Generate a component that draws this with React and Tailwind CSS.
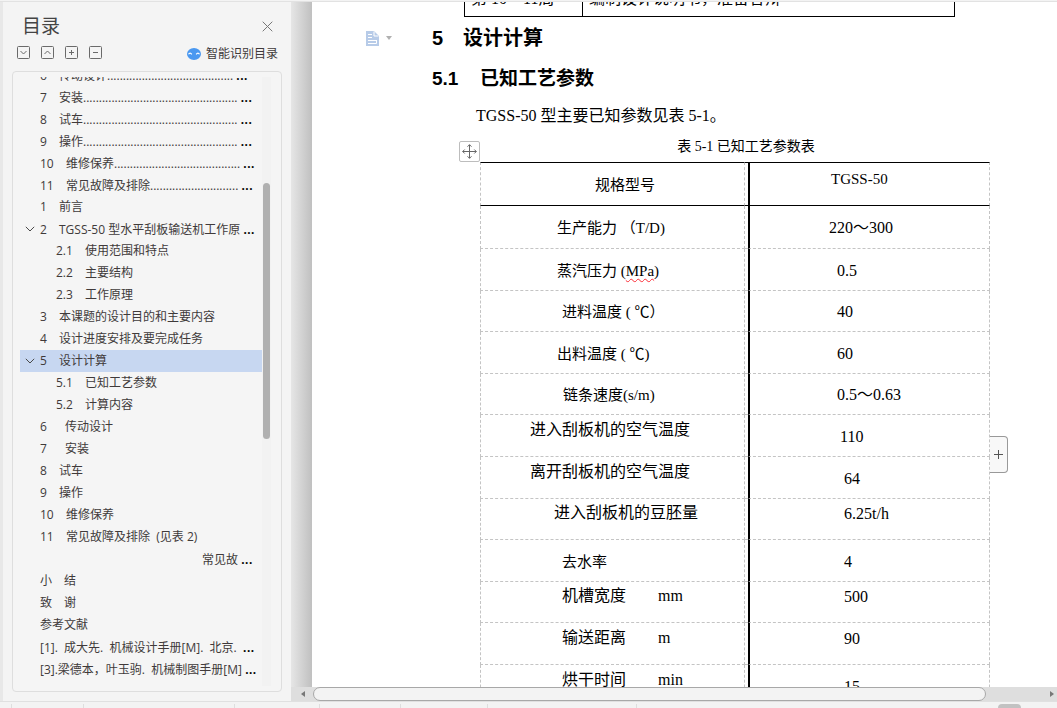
import React from "react";

const outline = [
  { num: "6", title: "传动设计", gap: "w-[19px]", dots: 40 },
  { num: "7", title: "安装", gap: "w-[19px]", dots: 49 },
  { num: "8", title: "试车", gap: "w-[19px]", dots: 49 },
  { num: "9", title: "操作", gap: "w-[19px]", dots: 49 },
  { num: "10", title: "维修保养", gap: "w-[26px]", dots: 40 },
  { num: "11", title: "常见故障及排除", gap: "w-[26px]", dots: 28 },
  { num: "1", title: "前言", gap: "w-[19px]" },
  { num: "2", title: "TGSS-50 型水平刮板输送机工作原", gap: "w-[19px]", open: true, cut: true },
  { num: "2.1", title: "使用范围和特点", gap: "w-[29px]", child: true },
  { num: "2.2", title: "主要结构", gap: "w-[29px]", child: true },
  { num: "2.3", title: "工作原理", gap: "w-[29px]", child: true },
  { num: "3", title: "本课题的设计目的和主要内容", gap: "w-[19px]" },
  { num: "4", title: "设计进度安排及要完成任务", gap: "w-[19px]" },
  { num: "5", title: "设计计算", gap: "w-[19px]", open: true, active: true },
  { num: "5.1", title: "已知工艺参数", gap: "w-[29px]", child: true },
  { num: "5.2", title: "计算内容", gap: "w-[29px]", child: true },
  { num: "6", title: "传动设计", gap: "w-[25px]" },
  { num: "7", title: "安装", gap: "w-[25px]" },
  { num: "8", title: "试车", gap: "w-[19px]" },
  { num: "9", title: "操作", gap: "w-[19px]" },
  { num: "10", title: "维修保养", gap: "w-[26px]" },
  { num: "11", title: "常见故障及排除  (见表 2)", gap: "w-[26px]" },
  { num: "", title: "常见故", gap: "w-[162px]", cut: true },
  { num: "小", title: "结", gap: "w-[24px]" },
  { num: "致", title: "谢", gap: "w-[24px]" },
  { num: "", title: "参考文献", gap: "w-0" },
  { num: "", title: "[1].  成大先.  机械设计手册[M].  北京. ", gap: "w-0", cut: true },
  { num: "", title: "[3].梁德本，叶玉驹.  机械制图手册[M]", gap: "w-0", cut: true },
];

// raised / valueRaised: text sits above the middle of its cell
const params = [
  { h: "h-[43px]", name: "生产能力 （T/D)", size: "text-[15px]", pad: "pl-[76px]", value: "220～300", valuePad: "pl-[79px]" },
  { h: "h-[42px]", name: "蒸汽压力 ", unit: "MPa", size: "text-[15px]", pad: "pl-[76px]", value: "0.5", valuePad: "pl-[87px]" },
  { h: "h-[41px]", name: "进料温度 ( ℃）", size: "text-[15px]", pad: "pl-[81px]", value: "40", valuePad: "pl-[87px]" },
  { h: "h-[42px]", name: "出料温度 ( ℃)", size: "text-[15px]", pad: "pl-[76px]", value: "60", valuePad: "pl-[87px]" },
  { h: "h-[41px]", name: "链条速度(s/m)", size: "text-[15px]", pad: "pl-[82px]", value: "0.5～0.63", valuePad: "pl-[87px]" },
  { h: "h-[42px]", name: "进入刮板机的空气温度", size: "text-base", pad: "pl-[49px]", raised: true, value: "110", valuePad: "pl-[90px]" },
  { h: "h-[42px]", name: "离开刮板机的空气温度", size: "text-base", pad: "pl-[49px]", raised: true, value: "64", valuePad: "pl-[94px]" },
  { h: "h-[41px]", name: "进入刮板机的豆胚量", size: "text-base", pad: "pl-[73px]", raised: true, value: "6.25t/h", valuePad: "pl-[94px]", valueRaised: true },
  { h: "h-[42px]", name: "去水率", size: "text-[15px]", pad: "pl-[81px]", value: "4", valuePad: "pl-[94px]" },
  { h: "h-[41px]", name: "机槽宽度\u3000\u3000mm", size: "text-base", pad: "pl-[81px]", raised: true, value: "500", valuePad: "pl-[94px]", valueRaised: true },
  { h: "h-[42px]", name: "输送距离\u3000\u3000m", size: "text-base", pad: "pl-[81px]", raised: true, value: "90", valuePad: "pl-[94px]", valueRaised: true },
  { h: "h-[42px]", name: "烘干时间\u3000\u3000min", size: "text-base", pad: "pl-[81px]", raised: true, value: "15", valuePad: "pl-[94px]" },
];

const tools = [
  { label: "全部展开", d: "M3.5 5 L6.5 8 L9.5 5" },
  { label: "全部折叠", d: "M3.5 8 L6.5 5 L9.5 8" },
  { label: "增加级别", d: "M4 6.5 H9 M6.5 4 V9" },
  { label: "减少级别", d: "M4 6.5 H9" },
];

const OutlineItem = ({ item }) => (
  <li className={`flex h-[22px] items-center ${item.active ? "bg-[#c7d7f1]" : ""}`}>
    <span className={`flex shrink-0 items-center pl-[5px] ${item.child ? "w-9" : "w-5"}`}>
      {item.open && (
        <button type="button" aria-label={`折叠 ${item.num}`}>
          <svg width="10" height="6" viewBox="0 0 10 6" fill="none" stroke="#4a4a4a" className="block">
            <path d="M0.8 0.8 L5 5 L9.2 0.8" />
          </svg>
        </button>
      )}
    </span>
    <a href="#section" className="flex items-baseline whitespace-pre">
      <span className={`shrink-0 ${item.gap}`}>{item.num}</span>
      <span>
        {item.title}
        {item.dots ? ".".repeat(item.dots) : ""}
      </span>
      {(item.dots || item.cut) && (
        <span className="pl-[3px] text-sm leading-4 font-semibold text-black">...</span>
      )}
    </a>
  </li>
);

const Sidebar = () => (
  <aside className="flex w-72 shrink-0 flex-col bg-[#f4f4f4] text-[#403a3a]">
    <div className="flex h-[42px] items-center justify-between pt-1.5 pr-[18px] pl-[19px]">
      <h2 className="text-[19px] leading-6 text-[#444]">目录</h2>
      <button type="button" aria-label="关闭">
        <svg width="11" height="11" viewBox="0 0 11 11" stroke="#777" className="block">
          <path d="M0.7 0.7 L10.3 10.3 M10.3 0.7 L0.7 10.3" />
        </svg>
      </button>
    </div>

    <div className="flex h-[17px] items-center justify-between pr-[13px] pl-3.5">
      <div className="flex gap-[11px]">
        {tools.map((tool) => (
          <button key={tool.label} type="button" aria-label={tool.label}>
            <svg width="13" height="13" viewBox="0 0 13 13" fill="none" stroke="#6a6a6a" className="block">
              <rect x="0.5" y="0.5" width="12" height="12" rx="1" />
              <path d={tool.d} />
            </svg>
          </button>
        ))}
      </div>
      <button type="button" className="flex items-center gap-[5px] pt-0.5 leading-4">
        <svg width="14" height="12" viewBox="0 0 14 12" className="block">
          <ellipse cx="7" cy="6" rx="7" ry="6" fill="#4a98f0" />
          <path d="M1.5 6.3 Q3 3.8 4.8 6.3 M9.2 6.3 Q11 3.8 12.5 6.3" fill="none" stroke="#fff" strokeWidth="1.2" />
        </svg>
        智能识别目录
      </button>
    </div>

    {/* Outline tree */}
    <nav className="mx-[9px] mt-2.5 mb-[9px] flex min-h-0 flex-1 rounded border border-[#dedede] bg-[#f5f5f5] py-[5px] pl-[7px]">
      <div className="min-w-0 flex-1 overflow-hidden">
        <ul className="-mt-[13px]">
          {outline.map((item, idx) => (
            <OutlineItem key={idx} item={item} />
          ))}
        </ul>
      </div>
      <div className="mr-2.5 w-[9px] bg-[#f2f2f2] pt-[106px]">
        <div className="ml-px h-64 w-[7px] rounded-full bg-[#b0b0b0]" />
      </div>
    </nav>
  </aside>
);

const ParamTable = () => (
  <div className="relative ml-[168px] w-[510px]">
    <table className="w-full table-fixed border-separate border-spacing-0">
      <colgroup>
        <col className="w-[265px]" />
        <col className="w-[3px]" />
        <col />
      </colgroup>
      <thead>
        <tr className="h-11 text-left">
          <th className="border-x border-y border-x-[#c4c4c4] border-y-black p-0 pt-0.5 pl-[114px] text-[15px] font-normal [border-left-style:dashed] [border-right-style:dashed]">
            规格型号
          </th>
          <td className="border-y border-black p-0" />
          <th className="border-y border-r border-l-2 border-black border-r-[#c4c4c4] p-0 pb-2.5 pl-[81px] text-[15px] font-normal [border-right-style:dashed]">
            TGSS-50
          </th>
        </tr>
      </thead>
      <tbody>
        {params.map((row) => (
          <tr key={row.name} className={row.h}>
            <td
              className={`border-x border-b border-dashed border-[#c4c4c4] p-0 leading-5 whitespace-nowrap ${row.size} ${row.pad} ${row.raised ? "pb-3" : "pt-0.5"}`}
            >
              {row.name}
              {row.unit && (
                <>
                  (
                  <span className="underline decoration-red-500 decoration-wavy decoration-1 underline-offset-2">
                    {row.unit}
                  </span>
                  )
                </>
              )}
            </td>
            <td className="border-b border-dashed border-[#c4c4c4] p-0" />
            <td
              className={`border-r border-b border-l-2 border-dashed border-[#c4c4c4] border-l-black p-0 text-base leading-5 [border-left-style:solid] ${row.valuePad} ${row.valueRaised ? "pb-2.5" : "pt-0.5"}`}
            >
              {row.value}
            </td>
          </tr>
        ))}
      </tbody>
    </table>

    {/* Table handles */}
    <button
      type="button"
      aria-label="移动表格"
      className="absolute -top-[21px] -left-[21px] flex size-[21px] items-center justify-center rounded-xs border border-[#bdbdbd] bg-white"
    >
      <svg width="15" height="15" viewBox="0 0 15 15" fill="none" stroke="#666" className="block">
        <path d="M7.5 0.7 V14.3 M0.7 7.5 H14.3 M5.5 2.7 L7.5 0.7 L9.5 2.7 M5.5 12.3 L7.5 14.3 L9.5 12.3 M2.7 5.5 L0.7 7.5 L2.7 9.5 M12.3 5.5 L14.3 7.5 L12.3 9.5" />
      </svg>
    </button>
    <button
      type="button"
      aria-label="添加列"
      className="absolute top-[274px] -right-[18px] flex h-[37px] w-[18px] items-center justify-center rounded-r border border-l-0 border-[#999] bg-[#f8f8f8]"
    >
      <svg width="9" height="9" viewBox="0 0 9 9" stroke="#555" className="block">
        <path d="M0 4.5 H9 M4.5 0 V9" />
      </svg>
    </button>
  </div>
);

const DocumentPage = () => (
  <main className="min-w-0 flex-1 overflow-hidden bg-white font-['Liberation_Serif','Noto_Sans_CJK_SC',serif] text-base text-black">
    <div className="ml-[152px] flex h-[15px] w-[491px] flex-col justify-end overflow-hidden">
      <table className="w-full shrink-0 table-fixed border-collapse border border-black">
        <tbody>
          <tr className="h-9">
            <td className="w-[118px] border border-black p-0 pl-1.5">第 10～11周</td>
            <td className="border border-black p-0 pl-1.5">编制设计说明书，准备答辩</td>
          </tr>
        </tbody>
      </table>
    </div>

    <div className="flex h-[42px] items-center pl-[54px]">
      <button type="button" aria-label="段落选项" className="flex w-[66px] items-center gap-[7px]">
        <svg width="13" height="15" viewBox="0 0 13 15" className="block">
          <path d="M0 0 H8 L13 5 V15 H0 Z" fill="#b7cbe8" />
          <path d="M8 0.5 V5 H12.5 M2 3.5 H6 M2 6.5 H6 M2 9.5 H11 M2 12.5 H10.5 V9.5" fill="none" stroke="#fff" />
        </svg>
        <svg width="6" height="4" viewBox="0 0 6 4" className="block">
          <path d="M0 0 H6 L3 4 Z" fill="#b0b0b0" />
        </svg>
      </button>
      <h1 className="flex font-['Liberation_Sans','Noto_Sans_CJK_SC',sans-serif] text-xl leading-6 font-bold">
        <span className="w-[31px]">5</span>设计计算
      </h1>
    </div>
    <h2 className="flex h-10 items-center pl-[120px] font-['Liberation_Sans','Noto_Sans_CJK_SC',sans-serif] text-[19px] leading-6 font-bold">
      <span className="w-12">5.1</span>已知工艺参数
    </h2>
    <p className="h-8 pt-px pl-[164px] leading-8">TGSS-50 型主要已知参数见表 5-1。</p>
    <p className="ml-[168px] h-[31px] w-[532px] text-center text-sm leading-[31px]">表 5-1 已知工艺参数表</p>
    <ParamTable />
  </main>
);

const HorizontalScrollbar = () => (
  <div className="flex h-3.5 shrink-0 items-center bg-[#dedede] pr-[3px] pl-2.5">
    <button type="button" aria-label="向左滚动">
      <svg width="4" height="6" viewBox="0 0 4 6" className="block">
        <path d="M4 0 V6 L0 3 Z" fill="#777" />
      </svg>
    </button>
    <div className="mr-16 ml-2 h-3.5 flex-1 rounded-full border border-[#a8a8a8] bg-[#f3f3f3]" />
    <button type="button" aria-label="向右滚动">
      <svg width="4" height="6" viewBox="0 0 4 6" className="block">
        <path d="M0 0 V6 L4 3 Z" fill="#777" />
      </svg>
    </button>
  </div>
);

const StatusBar = () => (
  <footer className="flex h-[7px] shrink-0 border-t border-[#e0e0e0] bg-[#f3f3f3] pt-0.5 pr-9">
    <div className="w-3 border-r border-[#dedede]" />
    <div className="w-[72px] border-r border-[#dedede]" />
    <div className="w-[151px] border-r border-[#dedede]" />
    <div className="w-[85px] border-r border-[#dedede]" />
    <div className="w-[81px] border-r border-[#dedede]" />
    <div className="w-[87px] border-r border-[#dedede]" />
    <div className="w-[149px] border-r border-[#dedede]" />
    <div className="ml-auto h-1 w-[23px] rounded-t bg-[#c2c2c2]" />
  </footer>
);

export default function App() {
  return (
    <div className="flex h-screen flex-col overflow-hidden bg-[#f3f3f3] font-['Open_Sans','Noto_Sans_CJK_SC',sans-serif] text-xs">
      <div className="h-0.5 shrink-0 border-b border-[#e2e2e2]" />
      <div className="flex min-h-0 flex-1">
        <div className="w-[3px] shrink-0 bg-[#e8e8e8]" />
        <Sidebar />
        <div className="flex min-w-0 flex-1 flex-col">
          <div className="flex min-h-0 flex-1">
            <div className="w-[21px] shrink-0 bg-linear-to-r from-[#e6e6e6] to-[#c0c0c0]" />
            <DocumentPage />
          </div>
          <HorizontalScrollbar />
        </div>
      </div>
      <StatusBar />
    </div>
  );
}
